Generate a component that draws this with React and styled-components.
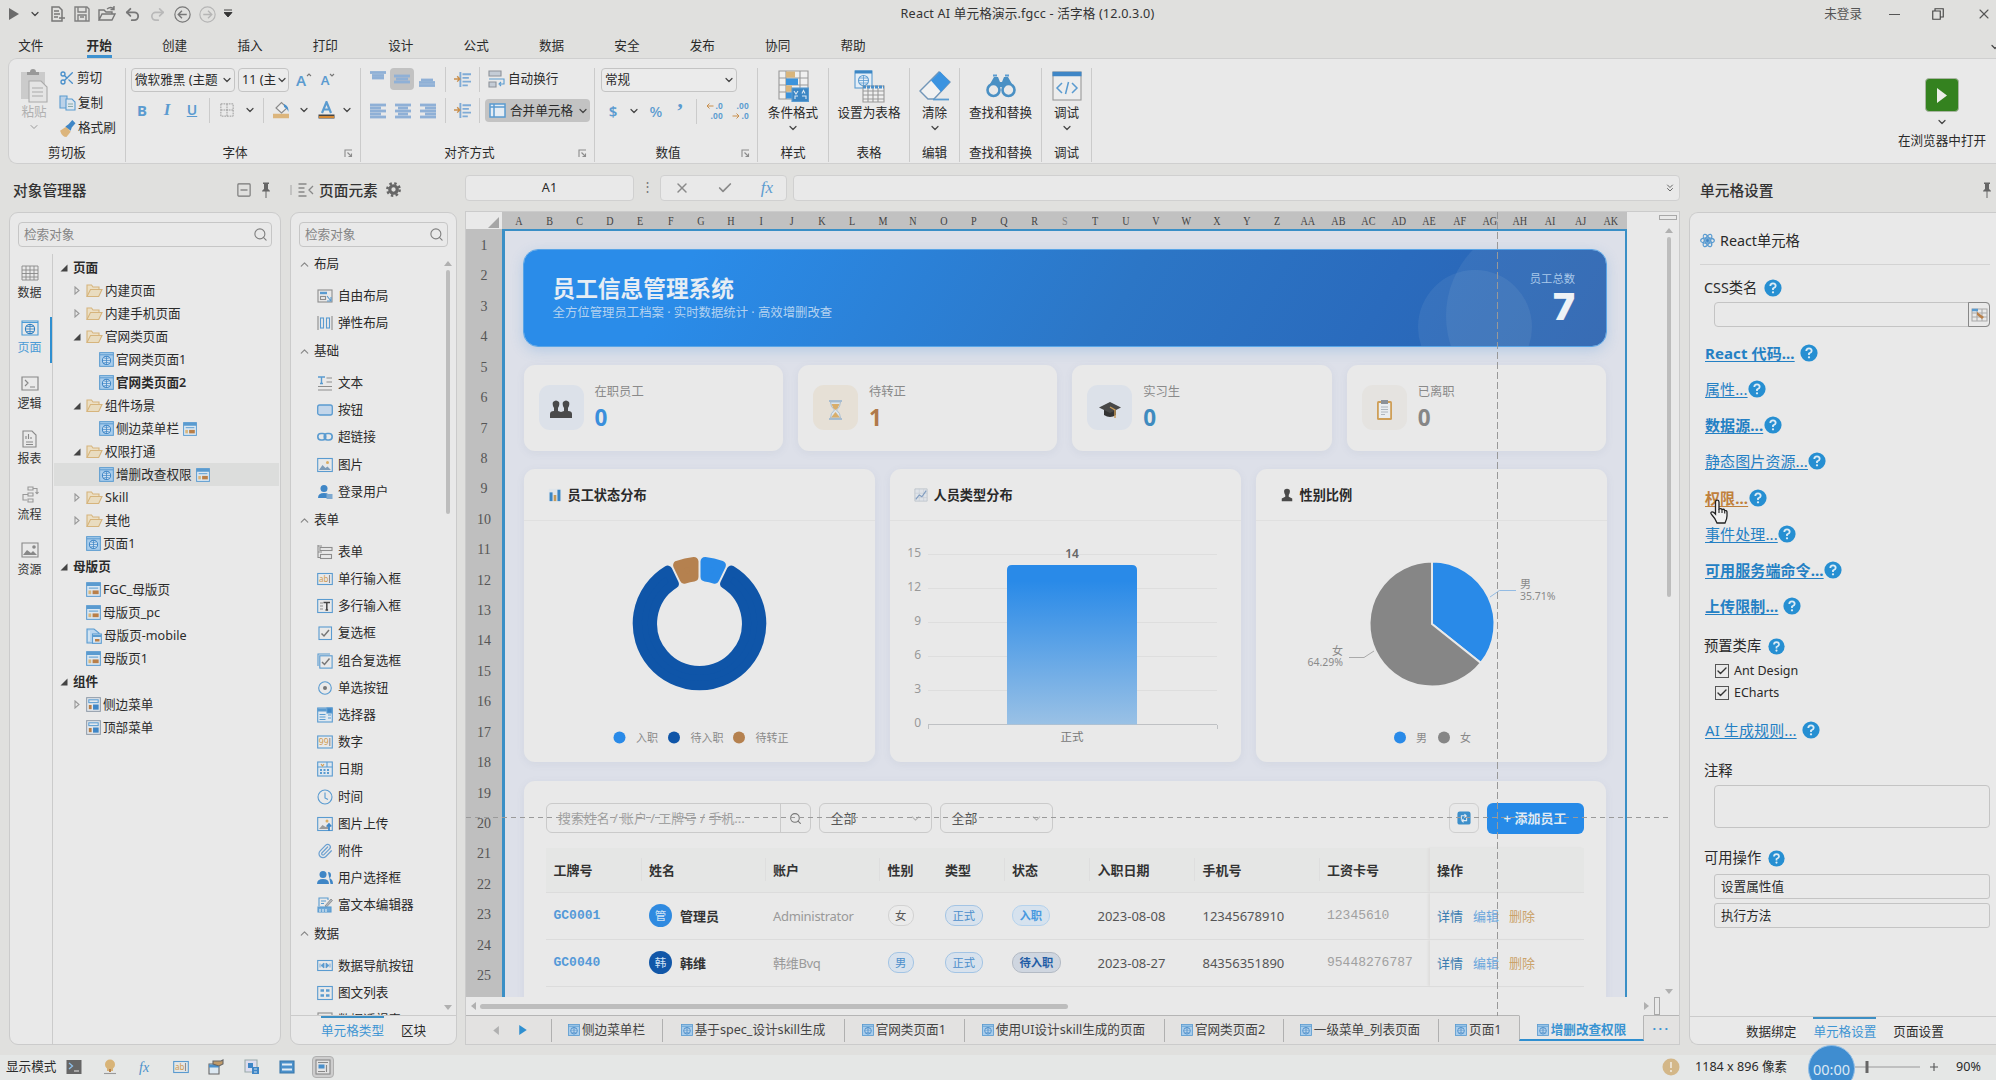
import React from 'react';
import styled, { createGlobalStyle } from 'styled-components';
import { ChevronDown, ChevronUp, ChevronsDown, Search, Undo2, Redo2, X, Check, Paperclip, Scissors } from 'lucide-react';

const BLUE = '#2f8fd0';
const LINE = '#cbcbcb';

const GlobalStyle = createGlobalStyle`
  * { box-sizing: border-box; }
  body {
    margin: 0;
    background: #e0e0de;
    color: #2a2a2a;
    font-family: 'Noto Sans', 'Noto Sans CJK SC', sans-serif;
    font-size: 12.6px;
    line-height: 18px;
    overflow: hidden;
  }
  svg { display: block; flex: none; }
`;

const Page = styled.div`
  width: 1996px;
  height: 1080px;
  display: flex;
  flex-direction: column;
  overflow: hidden;
  white-space: nowrap;
`;

/* ---------- icons ---------- */

const Svg = ({ w = 16, h, box, children }) => (
  <svg width={w} height={h || w} viewBox={box || '0 0 16 16'} fill="none" stroke="#5a9bd0" strokeWidth="1.1">
    {children}
  </svg>
);

const Chev = ({ size = 12, color = '#444' }) => <ChevronDown size={size} color={color} strokeWidth={2.4} />;

const Globe = ({ w = 15 }) => (
  <Svg w={w}>
    <rect x="0.7" y="0.7" width="14.6" height="14.6" fill="#a9cdec" stroke="#5a9bd0" />
    <path d="M1 3h14" />
    <circle cx="8" cy="9" r="4.4" fill="#cfe2f3" stroke="#3f86c6" />
    <path d="M8 4.6v8.8M3.6 9h8.8M5 6.2q3 1.6 6 0M5 11.8q3-1.6 6 0" stroke="#3f86c6" strokeWidth="0.8" />
  </Svg>
);

const Master = ({ w = 15 }) => (
  <Svg w={w}>
    <rect x="0.7" y="0.7" width="14.6" height="14.6" fill="#dce8f2" />
    <path d="M0.7 2.6h14.6" strokeWidth="3.4" />
    <path d="M3 6.5h10" stroke="#5a9bd0" />
    <rect x="2.6" y="9" width="3" height="4" fill="#d9b67d" stroke="none" />
    <rect x="7" y="9" width="6.5" height="4" fill="#b97f48" stroke="none" />
  </Svg>
);

const Component = () => (
  <Svg w={15}>
    <rect x="0.7" y="0.7" width="14.6" height="14.6" fill="#e4e9ee" stroke="#8f9ba8" />
    <rect x="3" y="3" width="10" height="3" stroke="#5a9bd0" />
    <rect x="3" y="8.5" width="3" height="4.5" fill="#b97f48" stroke="none" />
    <rect x="7.5" y="8" width="6" height="5.5" fill="#3f86c6" stroke="none" />
  </Svg>
);

const Mobile = () => (
  <Svg w={16}>
    <path d="M1 1h7l5 4v10H1z" fill="#b9d5ee" />
    <path d="M3 3v10" stroke="#e8f0f6" />
    <rect x="6.5" y="6" width="8.8" height="9.3" fill="#dce8f2" />
    <path d="M6.5 8h8.8" strokeWidth="2" />
    <rect x="9" y="11" width="4.5" height="2.5" fill="#b97f48" stroke="none" />
  </Svg>
);

const Folder = () => (
  <Svg w={17} h={15} box="0 0 17 15">
    <path d="M1 13.5V2h4.5l1.5 2h6v2.5" stroke="#d6b47c" fill="#ecdfc4" />
    <path d="M1 13.5 4.5 6.5H16l-3.3 7z" stroke="#d6b47c" fill="#e9dcc0" />
  </Svg>
);

const Help = ({ w = 18 }) => (
  <Svg w={w} box="0 0 18 18">
    <circle cx="9" cy="9" r="8.6" fill="#268fd2" stroke="none" />
    <path d="M6.3 7q0-2.7 2.7-2.7T11.7 7Q11.7 8.3 9 9.5V11" stroke="#dcecf6" strokeWidth="1.8" />
    <circle cx="9" cy="13.3" r="1.15" fill="#dcecf6" stroke="none" />
  </Svg>
);

const Pin = () => (
  <Svg w={10} h={16} box="0 0 10 16">
    <path d="M2 0.5h6v1.5H7v5q2 1 2 2.5H1Q1 8 3 7V2H2zM4.5 9.5h1V16h-1z" fill="#666" stroke="none" />
  </Svg>
);

const Launcher = () => (
  <Svg w={9} box="0 0 9 9">
    <path d="M1 8V1h7M3.5 3.5 7.5 7.5M7.5 4.5v3h-3" stroke="#8c8c8c" />
  </Svg>
);

const G = '#8d8d8d';
const elementIcons = {
  free: <><rect x="1" y="2" width="14" height="12" stroke={G} /><path d="M3 5h7" strokeWidth="2.4" /><rect x="3.5" y="8.5" width="5" height="3" stroke={G} /><path d="m10 8 4 5M14 9v4h-4" /></>,
  flex: <><path d="M1 1v14M15 1v14" stroke={G} /><rect x="3.5" y="3" width="3" height="10" /><rect x="9.5" y="3" width="3" height="10" /></>,
  text: <><path d="M1 2h7M4.5 2v6.5M3 8.5h3" strokeWidth="1.4" /><path d="M9.5 3H15M9.5 7H15M1 11.5h14M1 15h14" stroke={G} /></>,
  button: <rect x="0.7" y="3" width="14.6" height="10" rx="2" fill="#c3d6ea" strokeWidth="1.3" />,
  link: <><rect x="0.8" y="4.5" width="8" height="6.5" rx="3.2" strokeWidth="1.6" /><rect x="7.2" y="4.5" width="8" height="6.5" rx="3.2" strokeWidth="1.6" /></>,
  image: <><rect x="0.7" y="1.5" width="14.6" height="13" /><path d="m2 13 3.5-5 3 3 2-1.5L14 13z" fill="#7f9cb8" stroke="none" /><circle cx="10.5" cy="5.5" r="1.5" fill="#dcae64" stroke="none" /></>,
  user: <><circle cx="7" cy="4.5" r="3.5" fill="#3f86c6" stroke="none" /><path d="M1 14q0-5 6-5t6 5z" fill="#3f86c6" stroke="none" /><rect x="9.5" y="10" width="6" height="5" fill="#7fa9d0" stroke="none" /></>,
  form: <><path d="M1 2h4M1 8h4" stroke={G} /><rect x="3" y="3.5" width="12" height="3" stroke={G} /><path d="M1 1v13M1 13.5h3" stroke={G} /><rect x="3.5" y="10.5" width="11" height="4" stroke={G} /></>,
  single: <><rect x="0.7" y="2.5" width="14.6" height="11" /><text x="2" y="11" fontSize="8" fill="#cf9a50" stroke="none">ab</text><path d="M12.5 4v8" stroke={G} /></>,
  multi: <><rect x="0.7" y="1.5" width="14.6" height="13" /><path d="M3 5h3M3 8h3M3 11h3" stroke={G} /><path d="M6.5 4.5H13M9.8 4.5V12M8.5 12h2.6" stroke="#444" strokeWidth="1.5" /></>,
  check: <><rect x="2" y="2" width="12.5" height="12.5" /><path d="m4.5 8.5 2.5 2.5 5-6" stroke="#777" strokeWidth="1.5" /></>,
  checks: <><path d="M1 13V1h12" /><rect x="2.8" y="2.8" width="12.3" height="12.3" /><path d="m5 9 2.5 2.5 5-6" stroke="#777" strokeWidth="1.5" /></>,
  radio: <><circle cx="8" cy="8" r="6.3" /><circle cx="8" cy="8" r="2" fill="#777" stroke="none" /></>,
  select: <><rect x="0.7" y="1" width="14.6" height="14" fill="#dfe8f0" /><path d="M0.7 3h9" strokeWidth="3" /><rect x="10" y="1" width="5" height="5" fill="#3f86c6" /><path d="M2.5 7.5h6M2.5 10h6M2.5 12.5h6M11 8h3M11 11h3" /></>,
  number: <><rect x="0.7" y="2" width="14.6" height="12" /><text x="1.8" y="11" fontSize="8.5" fill="#cf9a50" stroke="none">99</text><path d="M12.8 4v8" stroke={G} /></>,
  date: <><rect x="0.7" y="1" width="14.6" height="14" fill="#dfe8f0" /><path d="M0.7 6h14.6M10 1v5" /><path d="M4 3l1.5 2L7 3" stroke="#cf9a50" /><path d="M3 9h10M3 12h10" strokeDasharray="2 1.5" strokeWidth="1.8" /></>,
  time: <><circle cx="8" cy="8" r="7" /><path d="M8 3.5V9l3 1.5" /></>,
  upload: <><rect x="0.7" y="1.5" width="14.6" height="13" /><path d="m2 13 3.5-4 3 2 2-1 2 3z" fill="#9a9a9a" stroke="none" /><circle cx="10" cy="5" r="1.5" fill="#dcae64" stroke="none" /><path d="M12 15V8M9.8 10.5 12 8l2.2 2.5" strokeWidth="1.8" stroke="#3f86c6" /></>,
  users: <><circle cx="6" cy="4.5" r="3.5" fill="#3f86c6" stroke="none" /><path d="M0 14q0-5 6-5t6 5z" fill="#3f86c6" stroke="none" /><path d="M11 2q3 0 3 3t-2 3q4 1 4 6h-2.5" fill="#3f86c6" stroke="none" /></>,
  rich: <><path d="M2 9V1h9v2M4 4h5M4 6.5h3" /><path d="m8 9 6-7 1.5 1.5L9.5 10z" fill="#b0b6bd" stroke="#888" strokeWidth="0.8" /><rect x="1" y="10" width="13" height="5" fill="#6ea8d8" /><path d="M3 12v3M6 12v3M9 12v3" stroke="#e6eef5" /></>,
  nav: <><rect x="0.7" y="2.5" width="14.6" height="10" /><path d="M3 5.5v4M7 5l-3 2.5L7 10zM13 5.5v4M9 5l3 2.5L9 10z" fill="#5a9bd0" strokeWidth="0.8" /></>,
  list: <><rect x="0.7" y="1.5" width="14.6" height="13" /><path d="M3.5 5.5h3.5M9 5.5h3.5M3.5 10.5h3.5M9 10.5h3.5" strokeWidth="2.6" /></>,
  table: <><rect x="1" y="1" width="14" height="14" stroke={G} /><path d="M1 5h14M6 5v10M1 10h14" stroke={G} /></>
};

/* ---------- title bar and menu ---------- */

const TitleBar = styled.div`
  height: 30px;
  display: grid;
  grid-template-columns: 1fr auto 1fr;
  align-items: center;
  padding: 0 4px 2px 8px;
`;

const QuickTools = styled.div`
  display: flex;
  align-items: center;
  gap: 8px;
`;

const WindowTools = styled.div`
  display: flex;
  align-items: center;
  justify-content: flex-end;
  color: #555;
  gap: 32px;
`;

const AppTitle = styled.div`
  color: #333;
  letter-spacing: 0.18px;
  padding-left: 55px;
`;

const Menu = styled.div`
  height: 28px;
  display: flex;
  align-items: center;
  padding: 5px 0 0 0;
`;

const MenuItem = styled.div`
  width: ${p => p.$w || 75.4}px;
  display: flex;
  justify-content: center;

  span {
    height: 22px;
    line-height: 20px;
    border-bottom: 3px solid ${p => (p.$active ? '#3d92d0' : 'transparent')};
    font-weight: ${p => (p.$active ? 600 : 400)};
  }
`;

const MenuMore = styled.div`
  margin-left: auto;
  margin-right: -5px;
`;

const menus = ['开始', '创建', '插入', '打印', '设计', '公式', '数据', '安全', '发布', '协同', '帮助'];

const Header = () => (
  <>
    <TitleBar>
      <QuickTools>
        <Svg w={12} h={14} box="0 0 12 14"><path d="M1 1v12l10-6z" fill="#6b6b6b" stroke="none" /></Svg>
        <div style={{ width: 14, paddingLeft: 1 }}><Chev size={12} /></div>
        <Svg w={16}><path d="M2 1h7l3 3v11H2zM4 5h5M4 8h6M4 11h4M12 9v6M9 12h6" stroke="#777" strokeWidth="1.5" /></Svg>
        <Svg w={16}><path d="M1 1h12l2 2v12H1zM4 1v5h8V1M4 15V9h8v6M6 11h4" stroke="#808080" strokeWidth="1.4" /></Svg>
        <Svg w={18} h={16} box="0 0 18 16"><path d="M1 14V4h5l2 2h6v2M1 14l3-6h13l-3 6zM9 3q4-3 7 0M16 0v3.5h-3.5" stroke="#777" strokeWidth="1.4" /></Svg>
        <Undo2 size={17} color="#777" strokeWidth={2.6} />
        <Redo2 size={17} color="#b9b9b9" strokeWidth={2.4} />
        <Svg w={17}><circle cx="8" cy="8" r="7.2" stroke="#777" /><path d="M12 8H4.5M7.5 4.5 4 8l3.5 3.5" stroke="#777" strokeWidth="1.3" /></Svg>
        <Svg w={17}><circle cx="8" cy="8" r="7.2" stroke="#b5b5b5" /><path d="M4 8h7.5M8.5 4.5 12 8l-3.5 3.5" stroke="#b5b5b5" strokeWidth="1.3" /></Svg>
        <Svg w={14} h={10} box="6 0 14 10"><path d="M6 1h8M6 3.5h8L10 8z" fill="#333" stroke="#333" strokeWidth="0.9" /></Svg>
      </QuickTools>
      <AppTitle>React AI 单元格演示.fgcc - 活字格 (12.0.3.0)</AppTitle>
      <WindowTools>
        <span style={{ marginRight: -5 }}>未登录</span>
        <Svg w={11}><path d="M0 8h16" stroke="#555" strokeWidth="1.5" /></Svg>
        <Svg w={12}><path d="M1 4h10v11H1zM4 4V1h11v11h-4" stroke="#444" strokeWidth="1.5" /></Svg>
        <X size={16} color="#555" strokeWidth={1.6} />
      </WindowTools>
    </TitleBar>
    <Menu>
      <MenuItem $w={61.5}><span>文件</span></MenuItem>
      {menus.map((m, i) => <MenuItem key={m} $active={i === 0}><span>{m}</span></MenuItem>)}
      <MenuMore><Chev size={12} /></MenuMore>
    </Menu>
  </>
);

/* ---------- ribbon ---------- */

const RibbonBox = styled.div`
  height: 106px;
  margin-left: 8px;
  display: flex;
  background: #e9e9e9;
  border: 1px solid #cfcfcf;
  border-right: 0;
  border-radius: 9px 0 0 9px;
  padding: 9px 0 0;
`;

const Group = styled.div`
  width: ${p => p.$w}px;
  height: 94px;
  display: flex;
  flex-direction: column;
  border-right: 1px solid ${LINE};
`;

const GroupBody = styled.div`
  height: 77px;
  display: flex;
  padding-left: ${p => p.$left || 0}px;
  flex-direction: ${p => (p.$row ? 'row' : 'column')};
`;

const GroupLabel = styled.div`
  display: grid;
  grid-template-columns: ${p => (p.$wide ? '1fr' : '1fr 16px')};
  align-items: center;
  text-align: center;
  line-height: 18px;
`;

const Tools = styled.div`
  height: ${p => p.$h || 24}px;
  margin-bottom: ${p => p.$mb || 0}px;
  display: flex;
  align-items: center;
`;

const Slot = styled.div`
  width: ${p => p.$w}px;
  height: 22px;
  display: flex;
  align-items: center;
  justify-content: center;
  border-radius: 4px;
  background: ${p => (p.$on ? '#c2c2c2' : 'none')};
`;

const Sep = styled.div`
  width: 1px;
  height: 25px;
  margin: 0 ${p => p.$m || 8}px;
  background: ${LINE};
`;

const Combo = styled.div`
  width: ${p => p.$w}px;
  height: 24px;
  margin-right: 3px;
  padding: 0 1px 0 3px;
  display: flex;
  align-items: center;
  justify-content: space-between;
  border: 1px solid #c4c4c4;
  border-radius: 4px;
  background: #ebebeb;
`;

const PasteButton = styled.div`
  width: 50px;
  display: flex;
  flex-direction: column;
  align-items: center;
  color: #b0b0b0;
`;

const ClipTools = styled.div`
  margin-top: -3px;
`;

const ClipTool = styled.div`
  height: 25.3px;
  display: flex;
  align-items: center;
  gap: 2px;
`;

const BigTool = styled.div`
  display: flex;
  flex-direction: column;
  align-items: center;
`;

const BigIcon = styled.div`
  height: 36px;
  display: flex;
  align-items: center;
`;

const Letter = styled.span`
  color: #5b9bd0;
  font-size: ${p => p.$size || 15}px;
  font-weight: ${p => p.$weight || 600};
  font-style: ${p => (p.$italic ? 'italic' : 'normal')};
  text-decoration: ${p => (p.$under ? 'underline' : 'none')};
  font-family: ${p => (p.$serif ? "'Liberation Serif', serif" : 'inherit')};
`;

const MergeButton = styled.div`
  width: 105px;
  height: 23px;
  display: flex;
  align-items: center;
  gap: 4px;
  padding-left: 4px;
  border-radius: 4px;
  background: #c3c3c3;
`;

const RunBox = styled.div`
  margin-left: auto;
  width: 108px;
  display: flex;
  flex-direction: column;
  align-items: center;
  padding: 10px 0 0;
  gap: 4px;
`;

const RunIcon = styled.div`
  width: 34px;
  height: 34px;
  display: flex;
  align-items: center;
  justify-content: center;
  background: #34821f;
  border: 1px solid #a9b5a2;
  border-radius: 4px;
`;

const Lines = ({ rows }) => (
  <Svg w={16}>
    {rows.map(([x1, x2, y]) => <path key={y} d={`M${x1} ${y}H${x2}`} stroke="#8fb0d6" strokeWidth="2.8" />)}
  </Svg>
);

const Indent = () => (
  <Svg w={17}>
    <path d="M6 1v14M8 3h8M8 6.5h6M8 10h8M8 13.5h5" stroke="#7fabd6" strokeWidth="1.8" />
    <path d="M0 7.5h5M3 5l2.5 2.5L3 10" stroke="#c98f4c" strokeWidth="1.3" />
  </Svg>
);

const DecimalBox = styled.div`
  width: 18px;
  height: 20px;
  display: flex;
  flex-direction: column;
  font-family: 'Liberation Sans', sans-serif;
  font-size: 8.6px;
  font-weight: 700;
  line-height: 10px;
  letter-spacing: 0.2px;
  color: #5b9bd0;

  div { display: flex; justify-content: flex-end; align-items: center; gap: 1px; }
`;

const Decimal = ({ a, b, flip }) => (
  <DecimalBox>
    <div>{!flip && <Svg w={8}><path d="M15 8H2M7 3 2 8l5 5" stroke="#c98f4c" strokeWidth="2" /></Svg>}{a}</div>
    <div>{flip && <Svg w={8}><path d="M1 8h13M9 3l5 5-5 5" stroke="#c98f4c" strokeWidth="2" /></Svg>}{b}</div>
  </DecimalBox>
);

const Ribbon = () => (
  <RibbonBox>
    <Group $w={117}>
      <GroupBody $row>
        <PasteButton>
          <Svg w={28} h={35} box="0 0 28 35">
            <path d="M1 4h24v27H1z" fill="#cbcbcb" stroke="none" />
            <path d="M7 7V4h3q0-3 3-3t3 3h3v3z" fill="#999" stroke="none" />
            <path d="M9 13h12l6 6v15H9z" fill="#e4e4e4" stroke="#aaa" />
            <path d="M12 20h11M12 24h11M12 28h11" stroke="#aaa" />
          </Svg>
          <span>粘贴</span>
          <ChevronDown size={12} color="#999" />
        </PasteButton>
        <ClipTools>
          <ClipTool>
            <Scissors size={16} color="#4a90cb" /><span>剪切</span>
          </ClipTool>
          <ClipTool>
            <Svg w={17} h={16} box="0 0 17 16">
              <path d="M1 1h7v12H1z" fill="#bcd2e8" /><path d="M7 4h6l3 3v8H7z" fill="#dde6ee" /><path d="M9 9h5M9 11.5h5" stroke="#8aa" />
            </Svg>
            <span>复制</span>
          </ClipTool>
          <ClipTool>
            <Svg w={17} h={17}>
              <path d="m1 10 6-4 4 5-4 5q-4 0-6-6z" fill="#dcb57c" stroke="none" />
              <path d="m6 6 3-2 3.5-4L15.5 3 12 7l-1 3z" fill="#3f86c6" stroke="none" />
            </Svg>
            <span>格式刷</span>
          </ClipTool>
        </ClipTools>
      </GroupBody>
      <GroupLabel $wide><span>剪切板</span></GroupLabel>
    </Group>

    <Group $w={235}>
      <GroupBody $left={5}>
        <Tools $mb={6}>
          <Combo $w={104}><span>微软雅黑 (主题</span><Chev /></Combo>
          <Combo $w={51}><span>11 (主</span><Chev /></Combo>
          <Slot $w={24}><Letter>A</Letter><Svg w={6} h={14} box="0 0 6 14"><path d="M1 3 3 1l2 2" stroke="#777" /></Svg></Slot>
          <Slot $w={24}><Letter $size={13}>A</Letter><Svg w={6} h={14} box="0 0 6 14"><path d="M1 1l2 2 2-2" stroke="#777" /></Svg></Slot>
        </Tools>
        <Tools>
          <Slot $w={22}><Letter $weight={700}>B</Letter></Slot>
          <Slot $w={28}><Letter $italic $serif $size={17} $weight={700}>I</Letter></Slot>
          <Slot $w={22}><Letter $under $size={14}>U</Letter></Slot>
          <Sep $m={6} />
          <Slot $w={22}><Svg w={14}><path d="M1 1h14v14H1zM8 1v14M1 8h14" stroke="#999" strokeDasharray="2 1" /></Svg></Slot>
          <Slot $w={24}><Chev /></Slot>
          <Sep $m={1} />
          <Slot $w={32}>
            <Svg w={18} h={18} box="0 0 18 18">
              <path d="M1 15h16" stroke="#dcb57c" strokeWidth="4.500" />
              <path d="m4 7 5.500-5.500L15 7l-5.500 5z" stroke="#8a8a8a" fill="#eee" /><path d="M12 3q5 2 4.500 8-1.500-4-4.500-5z" fill="#4a90cb" stroke="none" />
            </Svg>
          </Slot>
          <Slot $w={14}><Chev /></Slot>
          <Slot $w={30}>
            <Svg w={17} h={18} box="0 0 17 18">
              <path d="m4 12 4.500-11L13 12M5.500 8.500h6" strokeWidth="2.200" />
              <path d="M0.500 15.500h16" stroke="#444" strokeWidth="4" /><path d="M1 16h15" stroke="#d68a35" strokeWidth="2" />
            </Svg>
          </Slot>
          <Slot $w={12}><Chev /></Slot>
        </Tools>
      </GroupBody>
      <GroupLabel><span>字体</span><Launcher /></GroupLabel>
    </Group>

    <Group $w={234}>
      <GroupBody $left={5}>
        <Tools $h={22} $mb={9}>
          <Slot $w={24}><Lines rows={[[0, 16, 1.5], [2, 14, 4.5], [2, 14, 7]]} /></Slot>
          <Slot $w={24} $on><Lines rows={[[0, 16, 5], [2, 14, 8], [0, 16, 11]]} /></Slot>
          <Slot $w={26}><Lines rows={[[2, 14, 9], [0, 16, 11.5], [0, 16, 14.5]]} /></Slot>
          <Sep $m={5} />
          <Slot $w={22}><Indent /></Slot>
          <Sep $m={6} />
          <Slot $w={22}>
            <Svg w={18} h={18} box="0 0 18 18">
              <path d="M1 1h12v5H1zM1 12h7v5H1z" stroke="#8d9299" fill="#c4ccd6" /><path d="M1 9h15v5h-4M13 12l-2 2 2 2" />
            </Svg>
          </Slot>
          <span>自动换行</span>
        </Tools>
        <Tools $h={23}>
          <Slot $w={24}><Lines rows={[[0, 16, 2], [0, 11, 5], [0, 16, 8], [0, 11, 11], [0, 16, 14]]} /></Slot>
          <Slot $w={26}><Lines rows={[[0, 16, 2], [3, 13, 5], [0, 16, 8], [3, 13, 11], [0, 16, 14]]} /></Slot>
          <Slot $w={24}><Lines rows={[[0, 16, 2], [5, 16, 5], [0, 16, 8], [5, 16, 11], [0, 16, 14]]} /></Slot>
          <Sep $m={5} />
          <Slot $w={22}><Indent /></Slot>
          <Sep $m={5.5} />
          <MergeButton>
            <Svg w={17} h={15} box="0 0 17 15"><path d="M1 1h15v13H1zM1 4h15M5 1v13" strokeWidth="1.5" fill="#e5edf4" /></Svg>
            <span>合并单元格</span>
            <Chev />
          </MergeButton>
        </Tools>
      </GroupBody>
      <GroupLabel><span>对齐方式</span><Launcher /></GroupLabel>
    </Group>

    <Group $w={163}>
      <GroupBody $left={6}>
        <Tools $mb={7}><Combo $w={136}><span>常规</span><Chev /></Combo></Tools>
        <Tools>
          <Slot $w={24}><Letter>$</Letter></Slot>
          <Slot $w={18}><Chev /></Slot>
          <Slot $w={26}><Letter $weight={500}>%</Letter></Slot>
          <Slot $w={22}><Letter $size={22} $serif $weight={700}>’</Letter></Slot>
          <Sep $m={5} />
          <Slot $w={24}><Decimal a=".0" b=".00" /></Slot>
          <Slot $w={28}><Decimal a=".00" b=".0" flip /></Slot>
        </Tools>
      </GroupBody>
      <GroupLabel><span>数值</span><Launcher /></GroupLabel>
    </Group>

    <Group $w={71}>
      <GroupBody>
        <BigTool>
          <BigIcon>
            <Svg w={31} h={32} box="0 0 31 32">
              <path d="M1 1h29v28H1zM1 8h29M1 15h29M1 22h29M8 1v28M22 1v28" stroke="#999" fill="#f0f0f0" />
              <path d="M8 1.5h9v6H8zM8 15.5h6v6H8z" fill="#d9b57c" stroke="none" /><path d="M8 8.5h12v6.5H8zM8 22.5h6v6H8z" fill="#3b93dc" stroke="none" />
              <rect x="14" y="18" width="16.5" height="13.5" fill="#3b86c4" />
              <path d="m16 21 2 3 2-3M24 23.500l1.500-3 1.500 3M17 29v-3h3M24 26h4v3" stroke="#dbe8f3" />
            </Svg>
          </BigIcon>
          <span>条件格式</span><Chev />
        </BigTool>
      </GroupBody>
      <GroupLabel $wide><span>样式</span></GroupLabel>
    </Group>

    <Group $w={81}>
      <GroupBody>
        <BigTool>
          <BigIcon>
            <Svg w={31} h={33} box="0 0 31 33">
              <rect x="1" y="1" width="17" height="17" fill="#e4eef7" /><path d="M1 2h17" strokeWidth="3" stroke="#3b86c4" />
              <circle cx="9.5" cy="10.5" r="5" /><path d="M9.5 5.5v10M4.5 10.5h10M5.500 8h8M5.5 13h8" strokeWidth="0.8" />
              <path d="M9 16h21v16H9zM9 21h21M9 25h21M9 29h21M14 18v14M19 18v14M24 18v14" stroke="#999" fill="#efefef" /><path d="M9 17h21" stroke="#4a90cb" strokeWidth="3" strokeDasharray="3 1" />
            </Svg>
          </BigIcon>
          <span>设置为表格</span>
        </BigTool>
      </GroupBody>
      <GroupLabel $wide><span>表格</span></GroupLabel>
    </Group>

    <Group $w={50}>
      <GroupBody>
        <BigTool>
          <BigIcon>
            <Svg w={32} h={30} box="0 0 32 30">
              <path d="M1 20 20 1l11 10-16 17H9z" fill="#f1f1f1" stroke="#7296b8" strokeWidth="1.4" /><path d="m12 9.5 9-9L31 11l-9 10z" fill="#3b93e0" stroke="none" /><path d="M14 28.5h16" strokeWidth="1.8" />
            </Svg>
          </BigIcon>
          <span>清除</span><Chev />
        </BigTool>
      </GroupBody>
      <GroupLabel $wide><span>编辑</span></GroupLabel>
    </Group>

    <Group $w={82}>
      <GroupBody>
        <BigTool>
          <BigIcon>
            <Svg w={30} h={24} box="0 0 30 24">
              <circle cx="7.5" cy="16" r="6" strokeWidth="2.6" stroke="#4a90c4" /><circle cx="22.5" cy="16" r="6" strokeWidth="2.6" stroke="#4a90c4" />
              <path d="M4 10 8 3h4l2 5h2l2-5h4l4 7q-6-2-8 3h-6q-2-5-8-3z" fill="#4a90c4" stroke="none" /><path d="M7 1.5h4M19 1.5h4" strokeWidth="1.8" />
            </Svg>
          </BigIcon>
          <span>查找和替换</span>
        </BigTool>
      </GroupBody>
      <GroupLabel $wide><span>查找和替换</span></GroupLabel>
    </Group>

    <Group $w={50}>
      <GroupBody>
        <BigTool>
          <BigIcon>
            <Svg w={30} h={30} box="0 0 30 30">
              <rect x="1" y="1" width="28" height="28" stroke="#999" fill="#ededed" /><path d="M0.5 3h29" stroke="#3f86c6" strokeWidth="4.5" />
              <path d="m10 12-5 5 5 5M20 12l5 5-5 5M16.5 11l-3 12" strokeWidth="1.5" />
            </Svg>
          </BigIcon>
          <span>调试</span><Chev />
        </BigTool>
      </GroupBody>
      <GroupLabel $wide><span>调试</span></GroupLabel>
    </Group>

    <RunBox>
      <RunIcon><Svg w={12} h={17} box="0 0 12 17"><path d="M1 1v15l10-7.5z" fill="#eceee9" stroke="none" /></Svg></RunIcon>
      <Chev />
      <span>在浏览器中打开</span>
    </RunBox>
  </RibbonBox>
);

/* ---------- side panels ---------- */

const Main = styled.div`
  height: 891px;
  display: flex;
`;

const Column = styled.div`
  width: ${p => p.$w}px;
  margin-left: ${p => p.$ml || 9}px;
  display: flex;
  flex-direction: column;
  flex: none;
`;

const PanelHead = styled.div`
  height: 48px;
  padding-top: 3px;
  display: flex;
  align-items: center;
  font-size: 14.7px;
  font-weight: 500;
  color: #333;
`;

const Spacer = styled.div`
  flex: 1;
`;

const Panel = styled.div`
  height: 833px;
  border: 1px solid ${LINE};
  border-radius: 9px;
  background: #e9e9e9;
  display: flex;
  flex-direction: column;
  overflow: hidden;
`;

const SearchBox = styled.div`
  height: 25px;
  margin: 9px 8px 0;
  padding: 0 3px 0 5px;
  display: flex;
  align-items: center;
  justify-content: space-between;
  border: 1px solid #c6c6c6;
  border-radius: 4px;
  color: #858585;
`;

const TreeArea = styled.div`
  flex: 1;
  margin-top: 7px;
  display: flex;
`;

const Rail = styled.div`
  width: 43px;
  padding-top: 8px;
  border-right: 1px solid ${LINE};
`;

const RailItem = styled.div`
  height: 46px;
  margin-bottom: 9.4px;
  padding: 1px 1px 0 0;
  display: flex;
  flex-direction: column;
  align-items: center;
  font-size: 12px;
  color: ${p => (p.$active ? '#4b9bd6' : '#333')};
  border-right: 2px solid ${p => (p.$active ? BLUE : 'transparent')};

  span { line-height: 19px; }
`;

const RailIcon = styled.div`
  height: 20px;
  display: flex;
  align-items: center;
`;

const rail = [
  ['数据', <Svg w={18} h={16} box="0 0 18 16"><path d="M1 1h16v14H1zM1 5h16M1 8.5h16M1 12h16M5 1v14M9 1v14M13 1v14" stroke="#888" strokeWidth="0.9" /></Svg>],
  ['页面', <Svg w={18} h={16} box="0 0 18 16"><path d="M1 1h16v14H1zM1 2.5h16" stroke="#4b9bd6" /><circle cx="9" cy="9" r="4.6" stroke="#2f7fc0" /><path d="M9 4v10M4.5 9h9M5.5 6.5h7M5.5 11.5h7" stroke="#2f7fc0" strokeWidth="0.8" /></Svg>],
  ['逻辑', <Svg w={18} h={15} box="0 0 18 15"><path d="M1 1h16v13H1zM4 4l3 3-3 3M9 11h5" stroke="#888" strokeWidth="1.2" /></Svg>],
  ['报表', <Svg w={15} h={18} box="0 0 15 18"><path d="M1 1h9l4 4v12H1zM4 9V6M6.5 9V4M9 9V7M4 12h7M4 14.5h7" stroke="#888" /></Svg>],
  ['流程', <Svg w={18} h={17} box="0 0 18 17"><path d="M7 1h5v3H7zM7 7h5v3H7zM7 13h5v3H7zM12 2.5h4v5M16 8l-1.5-2M16 8l1.5-2M7 8.500H2V14h4" stroke="#999" /></Svg>],
  ['资源', <Svg w={18} h={16} box="0 0 18 16"><path d="M1 1h16v14H1z" stroke="#888" /><path d="m2 13 4-5 4 3 2-2 4 4z" fill="#888" stroke="none" /><circle cx="13" cy="5" r="1.8" fill="#888" stroke="none" /></Svg>]
];

const Tree = styled.div`
  flex: 1;
  padding: 2px 1px 0;
`;

const TreeRow = styled.div`
  height: 23px;
  padding-left: ${p => 6 + p.$level * 13}px;
  display: flex;
  align-items: center;
  background: ${p => (p.$selected ? '#dcdddc' : 'none')};
  font-weight: ${p => (p.$bold ? 600 : 400)};
  color: #2b2b2b;

  span { margin: 0 4px 0 ${p => (p.$level ? 2 : 0)}px; }
`;

const Toggle = styled.div`
  width: 13px;
`;

const Arrow = ({ open }) => (
  <Toggle>
    {open === true && <Svg w={8} box="0 0 8 8"><path d="M7.5 0.5v7h-7z" fill="#444" stroke="none" /></Svg>}
    {open === false && <Svg w={8} h={9} box="0 0 8 9"><path d="m2 1 4 3.5L2 8z" stroke="#999" /></Svg>}
  </Toggle>
);

const tree = [
  [0, '页面', true],
  [1, '内建页面', false, <Folder />],
  [1, '内建手机页面', false, <Folder />],
  [1, '官网类页面', true, <Folder />],
  [2, '官网类页面1', null, <Globe />],
  [2, '官网类页面2', null, <Globe />, 'bold'],
  [1, '组件场景', true, <Folder />],
  [2, '侧边菜单栏', null, <Globe />, 'master'],
  [1, '权限打通', true, <Folder />],
  [2, '增删改查权限', null, <Globe />, 'selected'],
  [1, 'Skill', false, <Folder />],
  [1, '其他', false, <Folder />],
  [1, '页面1', null, <Globe />],
  [0, '母版页', true],
  [1, 'FGC_母版页', null, <Master />],
  [1, '母版页_pc', null, <Master />],
  [1, '母版页-mobile', null, <Mobile />],
  [1, '母版页1', null, <Master />],
  [0, '组件', true],
  [1, '侧边菜单', false, <Component />],
  [1, '顶部菜单', null, <Component />]
];

const ObjectManager = () => (
  <Column $w={272}>
    <PanelHead>
      <span style={{ marginLeft: 4 }}>对象管理器</span>
      <Spacer />
      <Svg w={14}><rect x="1" y="1" width="14" height="14" rx="1" stroke="#777" strokeWidth="1.3" /><path d="M4 8h8" stroke="#777" strokeWidth="1.4" /></Svg>
      <Spacer style={{ flex: '0 0 10px' }} />
      <Pin />
      <Spacer style={{ flex: '0 0 10px' }} />
    </PanelHead>
    <Panel>
      <SearchBox><span>检索对象</span><Search size={15} color="#808080" strokeWidth={1.8} /></SearchBox>
      <TreeArea>
        <Rail>
          {rail.map(([label, icon], i) => (
            <RailItem key={label} $active={i === 1}><RailIcon>{icon}</RailIcon><span>{label}</span></RailItem>
          ))}
        </Rail>
        <Tree>
          {tree.map(([level, label, open, icon, mark]) => (
            <TreeRow key={label} $level={level} $bold={level === 0 || mark === 'bold'} $selected={mark === 'selected'}>
              <Arrow open={open} />
              {icon}
              <span>{label}</span>
              {(mark === 'master' || mark === 'selected') && <Master w={14} />}
            </TreeRow>
          ))}
        </Tree>
      </TreeArea>
    </Panel>
  </Column>
);

const sections = [
  ['布局', [['自由布局', 'free'], ['弹性布局', 'flex']]],
  ['基础', [['文本', 'text'], ['按钮', 'button'], ['超链接', 'link'], ['图片', 'image'], ['登录用户', 'user']]],
  ['表单', [
    ['表单', 'form'], ['单行输入框', 'single'], ['多行输入框', 'multi'], ['复选框', 'check'], ['组合复选框', 'checks'],
    ['单选按钮', 'radio'], ['选择器', 'select'], ['数字', 'number'], ['日期', 'date'], ['时间', 'time'],
    ['图片上传', 'upload'], ['附件', 'clip'], ['用户选择框', 'users'], ['富文本编辑器', 'rich']
  ]],
  ['数据', [['数据导航按钮', 'nav'], ['图文列表', 'list'], ['数据透视表', 'table']]]
];

const Palette = styled.div`
  height: 768px;
  padding-top: 2px;
  display: flex;
  overflow: hidden;
`;

const PaletteList = styled.div`
  flex: 1;
`;

const SectionTitle = styled.div`
  height: 33px;
  padding: 0 0 3px 7px;
  display: flex;
  align-items: center;
  gap: 3px;
`;

const PaletteItem = styled.div`
  height: 27.2px;
  padding-left: 26px;
  display: flex;
  align-items: center;
  gap: 5px;
`;

const VScroll = styled.div`
  width: 8px;
  margin-right: 4px;
  display: flex;
  flex-direction: column;
  align-items: center;
  padding: ${p => p.$pad || '10px 0 4px'};
`;

const Thumb = styled.div`
  width: 4px;
  height: ${p => p.$h}px;
  margin: 3px 0 auto;
  border-radius: 2px;
  background: #bdbdbd;
`;

const PanelTabs = styled.div`
  height: 28px;
  flex: none;
  display: flex;
  gap: ${p => p.$gap}px;
  padding-left: ${p => p.$left}px;
  border-top: 1px solid ${LINE};
`;

const PanelTab = styled.div`
  border-top: 2px solid ${p => (p.$active ? '#3d8fc4' : 'transparent')};
  color: ${p => (p.$active ? '#3f95d3' : '#2b2b2b')};
  line-height: 25px;
`;

const Tri = ({ d, w = 8, color = '#b0b0b0' }) => (
  <Svg w={w} h={w} box="0 0 8 8"><path d={d} fill={color} stroke="none" /></Svg>
);

const Elements = () => (
  <Column $w={167}>
    <PanelHead>
      <Svg w={26} h={16} box="0 0 26 16"><path d="M1 3v10" stroke="#aaa" /><path d="M8.5 2h8M8.5 6h6M8.5 10h6M8.5 14h8M23 4l-4 4 4 4" stroke="#888" strokeWidth="1.3" /></Svg>
      <span style={{ margin: '0 8px 0 3px' }}>页面元素</span>
      <Svg w={15}><circle cx="8" cy="8" r="4" stroke="#666" strokeWidth="3.4" /><circle cx="8" cy="8" r="6.6" stroke="#666" strokeWidth="2.6" strokeDasharray="2.6 2.58" /></Svg>
    </PanelHead>
    <Panel>
      <SearchBox><span>检索对象</span><Search size={15} color="#808080" strokeWidth={1.8} /></SearchBox>
      <Palette>
        <PaletteList>
          {sections.map(([title, items]) => (
            <React.Fragment key={title}>
              <SectionTitle><ChevronUp size={13} color="#888" strokeWidth={2.2} /><span>{title}</span></SectionTitle>
              {items.map(([label, icon]) => (
                <PaletteItem key={label}>
                  {icon === 'clip' ? <Paperclip size={16} color="#6a9fd0" strokeWidth={1.8} /> : <Svg w={16}>{elementIcons[icon]}</Svg>}
                  <span>{label}</span>
                </PaletteItem>
              ))}
            </React.Fragment>
          ))}
        </PaletteList>
        <VScroll><Tri d="M0 7 4 2l4 5z" /><Thumb $h={244} /><Tri d="M0 2l4 5 4-5z" /></VScroll>
      </Palette>
      <PanelTabs $left={30} $gap={17}>
        <PanelTab $active>单元格类型</PanelTab>
        <PanelTab>区块</PanelTab>
      </PanelTabs>
    </Panel>
  </Column>
);

/* ---------- employee page drawn on the sheet ---------- */

const Canvas = styled.div`
  width: 1125px;
  height: 768px;
  flex: none;
  overflow: hidden;
  padding: 18.5px 19px 0 18.5px;
  background: #dde0e9;
  border: 2px solid #3a8fc6;
  border-left-width: 3px;
  border-bottom: 0;
`;

const Hero = styled.div`
  height: 96px;
  display: flex;
  justify-content: space-between;
  padding: 25px 31px 0 29px;
  border-radius: 14px;
  color: #dfeaf6;
  position: relative;
  overflow: hidden;
  background: linear-gradient(120deg, #2a8ce9 0%, #2a8ce9 15%, #2c76c6 55%, #2a6bbd 78%, #2b62b0 100%);
  outline: 1px solid #5aa5e6;
`;

const HeroShadow = styled.div`
  border-radius: 14px;
  box-shadow: 0 4px 14px rgba(70, 140, 215, 0.28);
`;

const HeroTitle = styled.div`
  font-size: 22.7px;
  font-weight: 700;
  line-height: 28px;
  color: #e6edf4;
`;

const HeroSub = styled.div`
  font-size: 12.4px;
  line-height: 20px;
  color: #b4d2f0;
`;

const HeroTotal = styled.div`
  text-align: right;
  font-size: 11.3px;
  line-height: 18px;
  margin-top: -5px;
  color: #a9c9ea;
  z-index: 1;

  b {
    display: block;
    font-family: Inter, 'Noto Sans', sans-serif;
    font-size: 37px;
    font-weight: 900;
    line-height: 37px;
    color: #eef2f6;
  }
`;

/* translucent discs behind the total */
const Disc = styled.i`
  position: absolute;
  left: ${p => p.$x}px;
  top: ${p => p.$y}px;
  width: ${p => p.$d}px;
  height: ${p => p.$d}px;
  border-radius: 50%;
  background: rgba(220, 230, 235, 0.08);
`;

const Row = styled.div`
  display: grid;
  grid-template-columns: repeat(${p => p.$n}, 1fr);
  gap: 15px;
  margin-top: ${p => p.$mt || 19}px;
`;

const Card = styled.div`
  background: #e9e9e9;
  border-radius: 11px;
  box-shadow: 0 2px 8px rgba(90, 100, 140, 0.08);
`;

const Stat = styled(Card)`
  height: 86px;
  display: flex;
  gap: 11px;
  padding: 20px 15px;
`;

const StatIcon = styled.div`
  width: 45px;
  height: 45px;
  display: flex;
  align-items: center;
  justify-content: center;
  padding-top: 5px;
  border-radius: 11px;
  background: ${p => p.$bg};
`;

const StatText = styled.div`
  font-size: 12.3px;
  line-height: 14px;
  color: #8a8a8a;

  b { display: block; margin-top: 11px; font-size: 22.5px; line-height: 16px; color: ${p => p.$color}; }
`;

const stats = [
  ['在职员工', 0, '#dce1e9', '#3a8fdc', <Svg w={22} h={20} box="0 0 22 20"><path d="M3 2q3-3 6 0 1 3-1 6v3l3 1 3-1V8q-2-3-1-6 3-3 6 0 1 3-1 6v3q4 0 4 3v4H0v-4q0-3 4-3V8Q2 5 3 2z" fill="#4a4a4a" stroke="none" /></Svg>],
  ['待转正', 1, '#e6e0d6', '#b0794a', <Svg w={15} h={22} box="0 0 15 22"><path d="M1 1h13v2H1zM1 19h13v2H1z" fill="#a8bdd0" stroke="none" /><path d="M2.5 3h10q0 5-4 8 4 3 4 8h-10q0-5 4-8-4-3-4-8z" fill="#dde4ea" stroke="#9fb6cc" strokeWidth="0.8" /><path d="M3.5 5h8q-1 4-4 6-3-2-4-6zM7.5 13l4.5 5.5H3z" fill="#d8ae6c" stroke="none" /></Svg>],
  ['实习生', 0, '#dce1e9', '#3f8bbf', <Svg w={22} h={20} box="0 0 22 20"><path d="M5 8v7q6 4 12 0V8z" fill="#333" stroke="none" /><path d="M0 7.5 11 2l11 5.5L11 13z" fill="#484848" stroke="none" /><path d="M11 7l5 3v8" stroke="#c79a58" strokeWidth="1.4" /></Svg>],
  ['已离职', 0, '#e5e3e0', '#868686', <Svg w={17} h={22} box="0 0 17 22"><rect x="1" y="2" width="15" height="19" rx="1.5" fill="#cf9f58" stroke="none" /><path d="M2.8 4h11.4v15H2.8z" fill="#e9edf0" stroke="none" /><path d="M5 1h7v4H5z" fill="#8a9199" stroke="none" /><path d="M5 8h7M5 10.5h7M5 13h7M5 15.5h4" stroke="#a7b0b8" strokeWidth="0.9" /></Svg>]
];

const ChartCard = styled(Card)`
  height: 293px;
`;

const ChartHead = styled.div`
  height: 52px;
  padding-left: 24px;
  display: flex;
  align-items: center;
  gap: 6px;
  font-size: 13.2px;
  font-weight: 700;
  border-bottom: 1px solid #e0e0e0;
`;

const polar = (cx, cy, r, deg) => {
  const a = (deg - 90) * Math.PI / 180;
  return `${(cx + r * Math.cos(a)).toFixed(2)} ${(cy + r * Math.sin(a)).toFixed(2)}`;
};

const ringPath = (cx, cy, r1, r2, from, to) => {
  const big = to - from > 180 ? 1 : 0;
  // keep the gap between slices parallel by widening the trim on the inner arc
  const trim = 5.6;
  const o = trim / r2 * 57.3;
  const n = trim / r1 * 57.3;
  return `M${polar(cx, cy, r2, from + o)}A${r2} ${r2} 0 ${big} 1 ${polar(cx, cy, r2, to - o)}L${polar(cx, cy, r1, to - n)}A${r1} ${r1} 0 ${big} 0 ${polar(cx, cy, r1, from + n)}Z`;
};

const Dot = ({ x, c }) => <circle cx={x} cy="216.5" r="6" fill={c} />;

const Chart = styled.svg`
  font-size: 11px;
  fill: #8a8a8a;
`;

const Donut = () => (
  <Chart width="351" height="240">
    {[[0, 25.7, '#298ae8'], [25.7, 334.3, '#0f55a8'], [334.3, 360, '#b5814f']].map(([a, b, c]) => (
      <path key={c} d={ringPath(175.5, 102.5, 47, 62.2, a, b)} fill={c} stroke={c} strokeWidth="9.2" strokeLinejoin="round" />
    ))}
    <Dot x={95.5} c="#298ae8" /><text x="112" y="220.5">入职</text>
    <Dot x={150} c="#0f55a8" /><text x="166.5" y="220.5">待入职</text>
    <Dot x={215} c="#b5814f" /><text x="231.5" y="220.5">待转正</text>
  </Chart>
);

const Bars = () => (
  <Chart width="351" height="240">
    <defs>
      <linearGradient id="bar" x1="0" y1="0" x2="0" y2="1">
        <stop offset="0.1" stopColor="#298ae8" /><stop offset="1" stopColor="#9ac1e5" />
      </linearGradient>
    </defs>
    {[15, 12, 9, 6, 3, 0].map((v, i) => (
      <g key={v}>
        <path d={`M38 ${33.5 + i * 34}H327`} stroke={v ? '#dedede' : '#bfc1c4'} />
        <text x="31" y={36 + i * 34} fontSize="12" textAnchor="end" fill="#999">{v}</text>
      </g>
    ))}
    <path d="M38.5 204v4M327.5 204v4" stroke="#bfc1c4" />
    <path d="M117 203.5V49q0-5 5-5h120q5 0 5 5v154.5z" fill="url(#bar)" />
    <text x="182" y="36.5" fontSize="12" fontWeight="600" textAnchor="middle" fill="#666">14</text>
    <text x="182" y="219.5" fontSize="11.5" textAnchor="middle" fill="#777">正式</text>
  </Chart>
);

const Pie = () => (
  <Chart width="351" height="240">
    <path d={`M176 103L${polar(176, 103, 62.5, 0)}A62.5 62.5 0 0 1 ${polar(176, 103, 62.5, 128.6)}Z`} fill="#298ae8" stroke="#e9e9e9" strokeWidth="2" />
    <path d={`M176 103L${polar(176, 103, 62.5, 128.6)}A62.5 62.5 0 1 1 ${polar(176, 103, 62.5, 0)}Z`} fill="#868686" stroke="#e9e9e9" strokeWidth="2" />
    <path d="M234 76l9.5-6.5H260" fill="none" stroke="#93bbe3" />
    <path d="M118 130l-10 6.5H93" fill="none" stroke="#aaa" />
    <text x="264" y="67">男</text><text x="264" y="78.5" fontSize="10.5">35.71%</text>
    <text x="87" y="134" textAnchor="end">女</text><text x="87" y="145" fontSize="10.5" textAnchor="end">64.29%</text>
    <Dot x={144} c="#298ae8" /><text x="160" y="220.5">男</text>
    <Dot x={188} c="#868686" /><text x="204" y="220.5">女</text>
  </Chart>
);

const charts = [
  ['员工状态分布', <Donut />, <Svg w={14}><path d="M1 1h14v14H1z" fill="#dfe5ea" stroke="none" /><path d="M3.5 15V5" stroke="#3b86c4" strokeWidth="3.4" /><path d="M8 15V8" stroke="#c49a5a" strokeWidth="3" /><path d="M12.5 15V2" stroke="#3b86c4" strokeWidth="3.4" /></Svg>],
  ['人员类型分布', <Bars />, <Svg w={14}><path d="M1 1h14v14H1z" fill="#dfe3e8" stroke="#b4bcc4" strokeWidth="0.8" /><path d="M1 6h14M1 11h14M6 1v14M11 1v14" stroke="#c4cbd2" strokeWidth="0.7" /><path d="m2 13 4-5 3 2 5-7" stroke="#7f9cc0" strokeWidth="1.3" /></Svg>],
  ['性别比例', <Pie />, <Svg w={14}><path d="M5 2q3-2.5 6 0 1 3-1 6v2l4 2v3H2v-3l4-2V8Q4 5 5 2z" fill="#4a4a4a" stroke="none" /></Svg>]
];

const TableCard = styled(Card)`
  height: 300px;
  margin-top: 18.5px;
  padding: 22px 22.5px 0;
`;

const TableTools = styled.div`
  height: 31px;
  display: flex;
  align-items: center;
  margin-bottom: 14.5px;
`;

const Field = styled.div`
  width: ${p => p.$w}px;
  height: 30px;
  margin-right: 7.5px;
  display: flex;
  align-items: center;
  justify-content: space-between;
  padding: 0 ${p => p.$pr || 9}px 0 11px;
  border: 1px solid #cacaca;
  border-radius: 6px;
  font-size: 12.9px;
  color: ${p => (p.$hint ? '#a2a2a2' : '#555')};
`;

const SearchButton = styled.div`
  width: 30px;
  height: 28px;
  display: flex;
  align-items: center;
  justify-content: center;
  border-left: 1px solid #cacaca;
`;

const Refresh = styled.div`
  width: 30px;
  height: 30px;
  margin: 0 8px 0 auto;
  display: flex;
  align-items: center;
  justify-content: center;
  border: 1px solid #cfcfcf;
  border-radius: 6px;
`;

const AddButton = styled.div`
  width: 97px;
  height: 31px;
  line-height: 31px;
  text-align: center;
  border-radius: 6px;
  background: #268ae8;
  color: #dfeaf6;
  font-size: 13px;
  font-weight: 600;
`;

const TableRow = styled.div`
  height: ${p => p.$h}px;
  display: grid;
  grid-template-columns: 95.5px 124px 114.5px 57.5px 67px 85.5px 105px 124.5px 110px 1fr;
  align-items: center;
  background: ${p => (p.$head ? '#e5e6e5' : 'none')};
  border-bottom: 1px solid #dcdcdc;
  font-size: 13px;
  color: #555;
`;

const Cell = styled.div`
  height: ${p => (p.$fixed ? '100%' : '23px')};
  display: flex;
  align-items: center;
  gap: ${p => p.$gap || 8}px;
  padding-left: 7.5px;
  color: ${p => p.$color || 'inherit'};
  font-weight: ${p => (p.$bold ? 600 : 400)};
  letter-spacing: ${p => p.$track || 0}px;
  border-right: ${p => (p.$rule ? '1px solid #dedede' : '0')};
  box-shadow: ${p => (p.$fixed ? '-2px 0 2px #dedddc' : 'none')};
`;

const Mono = styled.span`
  font-family: 'Liberation Mono', monospace;
  font-weight: ${p => (p.$bold ? 700 : 400)};
  color: ${p => (p.$bold ? '#5499d8' : '#a0a0a0')};
`;

const Avatar = styled.div`
  width: 23px;
  height: 23px;
  line-height: 23px;
  text-align: center;
  border-radius: 50%;
  background: ${p => p.$bg};
  color: #cfe2f5;
  font-size: 11.5px;
  font-weight: 400;
`;

const Tag = styled.div`
  height: 21px;
  line-height: 19px;
  padding: 0 6.5px;
  border: 1px solid ${p => p.$line};
  border-radius: 10px;
  background: ${p => p.$bg};
  color: ${p => p.$color};
  font-size: 11.3px;
  font-weight: ${p => (p.$bold ? 700 : 400)};
`;

const tones = {
  plain: { $line: '#d2d2d2', $bg: '#ebebeb', $color: '#555' },
  blue: { $line: '#a3c4e4', $bg: '#d8e2ed', $color: '#4d8fcb' },
  sky: { $line: '#b5d2ec', $bg: '#d6e2ee', $color: '#4799e0', $bold: true },
  navy: { $line: '#b3bac4', $bg: '#cfd6e0', $color: '#1f5ca5', $bold: true }
};

const columns = ['工牌号', '姓名', '账户', '性别', '类型', '状态', '入职日期', '手机号', '工资卡号', '操作'];

const employees = [
  { id: 'GC0001', name: '管理员', short: '管', bg: '#2f8ae0', account: 'Administrator', sex: '女', sexTone: 'plain', state: '入职', stateTone: 'sky', date: '2023-08-08', phone: '12345678910', card: '12345610' },
  { id: 'GC0040', name: '韩维', short: '韩', bg: '#1257a8', account: '韩维Bvq', sex: '男', sexTone: 'blue', state: '待入职', stateTone: 'navy', date: '2023-08-27', phone: '84356351890', card: '95448276787' }
];

const EmployeePage = () => (
  <Canvas>
    <HeroShadow>
      <Hero>
        <Disc $x={894} $y={20} $d={114} />
        <Disc $x={922} $y={-29} $d={190} />
        <div>
          <HeroTitle>员工信息管理系统</HeroTitle>
          <HeroSub>全方位管理员工档案 · 实时数据统计 · 高效增删改查</HeroSub>
        </div>
        <HeroTotal>员工总数<b>7</b></HeroTotal>
      </Hero>
    </HeroShadow>
    <Row $n={4}>
      {stats.map(([label, value, bg, color, icon]) => (
        <Stat key={label}>
          <StatIcon $bg={bg}>{icon}</StatIcon>
          <StatText $color={color}>{label}<b>{value}</b></StatText>
        </Stat>
      ))}
    </Row>
    <Row $n={3} $mt={18.5}>
      {charts.map(([label, chart, icon]) => (
        <ChartCard key={label}>
          <ChartHead>{icon}{label}</ChartHead>
          {chart}
        </ChartCard>
      ))}
    </Row>
    <TableCard>
      <TableTools>
        <Field $w={265} $pr={0.1} $hint>
          <span>搜索姓名 / 账户 / 工牌号 / 手机...</span>
          <SearchButton><Search size={13} color="#777" /></SearchButton>
        </Field>
        <Field $w={113.5}><span>全部</span><ChevronDown size={13} color="#b5b5b5" /></Field>
        <Field $w={113.5}><span>全部</span><ChevronDown size={13} color="#b5b5b5" /></Field>
        <Refresh>
          <Svg w={14}><rect x="0.5" y="0.5" width="15" height="15" rx="2.5" fill="#3d8fca" stroke="none" /><path d="M5 10V5.5h5.5M8.500 3.500l2 2-2 2M11 6.500V11H5.500M7.500 9l-2 2 2 2" stroke="#dfeaf3" strokeWidth="1.2" /></Svg>
        </Refresh>
        <AddButton>+ 添加员工</AddButton>
      </TableTools>
      <TableRow $h={44.5} $head>
        {columns.map((c, i) => <Cell key={c} $bold $color="#333" $rule={i < 8 && i !== 3} $fixed={i === 9}>{c}</Cell>)}
      </TableRow>
      {employees.map(e => (
        <TableRow key={e.id} $h={47}>
          <Cell><Mono $bold>{e.id}</Mono></Cell>
          <Cell $bold $color="#333"><Avatar $bg={e.bg}>{e.short}</Avatar>{e.name}</Cell>
          <Cell $color="#999" $track={-0.3}>{e.account}</Cell>
          <Cell><Tag {...tones[e.sexTone]}>{e.sex}</Tag></Cell>
          <Cell><Tag {...tones.blue}>正式</Tag></Cell>
          <Cell><Tag {...tones[e.stateTone]}>{e.state}</Tag></Cell>
          <Cell>{e.date}</Cell>
          <Cell>{e.phone}</Cell>
          <Cell><Mono>{e.card}</Mono></Cell>
          <Cell $fixed $gap={10}>
            <span style={{ color: '#3b7cb0' }}>详情</span>
            <span style={{ color: '#6aa6dc' }}>编辑</span>
            <span style={{ color: '#cba36a' }}>删除</span>
          </Cell>
        </TableRow>
      ))}
    </TableCard>
  </Canvas>
);

/* ---------- spreadsheet ---------- */

const FormulaBar = styled.div`
  height: 47px;
  padding-top: 11px;
  display: flex;
`;

const Box = styled.div`
  width: ${p => p.$w}px;
  height: 26px;
  display: flex;
  align-items: center;
  justify-content: ${p => p.$justify || 'center'};
  border: 1px solid #d0d0d0;
  border-radius: 4px;
  background: #e9e9e9;
  padding: 0 ${p => p.$pad || 0}px;
`;

const Dots = styled.div`
  width: 26px;
  line-height: 24px;
  text-align: center;
  color: #777;
`;

const Sheet = styled.div`
  height: 834px;
  display: flex;
  flex-direction: column;
  border: 1px solid ${LINE};
  background: #e9e9e9;
  position: relative;
`;

const Grid = styled.div`
  height: 786px;
  display: grid;
  grid-template-columns: 36px 1125px 1fr;
  grid-template-rows: 17px 1fr;
`;

const Corner = styled.div`
  display: flex;
  justify-content: flex-end;
  align-items: flex-end;
  padding: 0 3px 1px 0;
`;

const ColHeads = styled.div`
  display: flex;
  padding-left: 1.5px;
  background: #c1c1c1;
`;

const ColHead = styled.div`
  width: 30.35px;
  display: flex;
  justify-content: center;
  font-family: 'Liberation Serif', serif;
  font-size: 13.5px;
  line-height: 17px;
  color: ${p => (p.$dim ? '#888' : '#444')};

  span { transform: scaleX(0.75); }
`;

const RowHeads = styled.div`
  background: #bfbfbf;
  overflow: hidden;
`;

const RowHead = styled.div`
  height: 30.43px;
  line-height: 33px;
  text-align: center;
  font-family: 'Liberation Serif', serif;
  font-size: 14px;
  color: #555;
`;

const SheetScroll = styled.div`
  grid-row: 1 / 3;
  grid-column: 3;
  display: flex;
  flex-direction: column;
  align-items: flex-end;
  padding: 3px 2px 0;
`;

const Splitter = styled.div`
  width: ${p => p.$w}px;
  height: ${p => p.$h}px;
  border: 1px solid #a8a8a8;
`;

const HScroll = styled.div`
  height: 18px;
  display: flex;
  align-items: center;
  padding: 0 19px 0 3px;
  gap: 3px;
`;

const HThumb = styled.div`
  width: 588px;
  height: 5px;
  border-radius: 3px;
  background: #bdbdbd;
`;

/* page guides laid over the sheet */
const GuideV = styled.div`
  position: absolute;
  left: 1031px;
  top: 0;
  height: 804px;
  width: 1px;
  background: repeating-linear-gradient(#999 0 7px, transparent 7px 10px);
`;

const GuideH = styled.div`
  position: absolute;
  left: 0;
  top: 605px;
  width: 1206px;
  height: 1px;
  background: repeating-linear-gradient(90deg, #9a9a9a 0 5px, transparent 5px 9px);
`;

const Tabs = styled.div`
  height: 29px;
  display: flex;
  background: #e3e2e1;
`;

const TabNav = styled.div`
  width: 85px;
  display: flex;
  align-items: center;
  padding-left: 25px;
  gap: 18px;
  border-top: 1px solid #b5b5b5;
`;

const Tab = styled.div`
  width: ${p => p.$w}px;
  display: flex;
  align-items: center;
  justify-content: center;
  gap: 2px;
  border-top: 1px solid ${p => (p.$active ? '#e9e9e9' : '#b5b5b5')};
  border-bottom: ${p => (p.$active ? '2px solid #2f8fd0' : '0')};
  border-left: ${p => (p.$active ? '1px solid #b5b5b5' : '0')};
  border-right: ${p => (p.$active ? '1px solid #b5b5b5' : '0')};
  margin-bottom: ${p => (p.$active ? 3 : 0)}px;
  padding-top: ${p => (p.$active ? 4 : 0)}px;
  background: ${p => (p.$active ? '#e9e9e9' : 'linear-gradient(#b0b0b0, #b0b0b0) 0 50% / 1px 23px no-repeat')};
  color: ${p => (p.$active ? '#3a94d2' : '#444')};
  font-weight: ${p => (p.$active ? 700 : 400)};
`;

const TabMore = styled.div`
  flex: 1;
  border-top: 1px solid #b5b5b5;
  color: #3a94d2;
  text-align: center;
  font-weight: 700;
  letter-spacing: 2.5px;
  line-height: 20px;
`;

const colNames = [...Array(37)].map((_, i) => (i < 26 ? '' : 'A') + String.fromCharCode(65 + i % 26));

const tabs = [
  ['侧边菜单栏', 111], ['基于spec_设计skill生成', 182], ['官网类页面1', 119.5], ['使用UI设计skill生成的页面', 200],
  ['官网类页面2', 119], ['一级菜单_列表页面', 155], ['页面1', 81.5], ['增删改查权限', 125]
];

const Workbook = () => (
  <Column $w={1215} $ml={8}>
    <FormulaBar>
      <Box $w={169}>A1</Box>
      <Dots>⋮</Dots>
      <Box $w={127} $justify="space-between" $pad={13}>
        <X size={16} color="#8a8a8a" strokeWidth={2.2} />
        <Check size={16} color="#8a8a8a" strokeWidth={2.6} />
        <Letter $serif $italic $weight={400} $size={17}>fx</Letter>
      </Box>
      <Box $w={887} $justify="flex-end" $pad={3} style={{ marginLeft: 'auto' }}>
        <ChevronsDown size={12} color="#666" />
      </Box>
    </FormulaBar>
    <Sheet>
      <Grid>
        <Corner><Svg w={11} box="0 0 11 11"><path d="M11 0v11H0z" fill="#a5a5a5" stroke="none" /></Svg></Corner>
        <ColHeads>{colNames.map(c => <ColHead key={c} $dim={c === 'S'}><span>{c}</span></ColHead>)}</ColHeads>
        <RowHeads>{[...Array(25)].map((_, i) => <RowHead key={i}>{i + 1}</RowHead>)}</RowHeads>
        <EmployeePage />
        <SheetScroll>
          <Splitter $w={18} $h={5} />
          <VScroll $pad="6px 0 2px" style={{ flex: 1 }}>
            <Tri d="M0 7 4 2l4 5z" /><Thumb $h={360} /><Tri d="M0 2l4 5 4-5z" />
          </VScroll>
        </SheetScroll>
      </Grid>
      <HScroll>
        <Tri d="M7 0 2 4l5 4z" />
        <HThumb />
        <Spacer />
        <Tri d="M1 0l5 4-5 4z" />
        <Splitter $w={6} $h={18} />
      </HScroll>
      <Tabs>
        <TabNav><Tri w={9} d="M7 0 2 4l5 4z" /><Tri w={10} d="M1 0l6 4-6 4z" color="#2f8fd0" /></TabNav>
        {tabs.map(([label, w], i) => <Tab key={label} $w={w} $active={i === 7}><Globe w={12} /><span>{label}</span></Tab>)}
        <TabMore>...</TabMore>
      </Tabs>
      <GuideV />
      <GuideH />
    </Sheet>
  </Column>
);

/* ---------- cell settings ---------- */

const SettingsPanel = styled(Panel)`
  border-radius: 9px 0 0 9px;
  border-right: 0;
  font-size: 14.3px;
  line-height: 20px;
  position: relative;
`;

const SettingsBody = styled.div`
  flex: 1;
  padding: 18px 7px 0 10px;
`;

const ReactTitle = styled.div`
  height: 34px;
  display: flex;
  align-items: flex-start;
  gap: 5px;
  border-bottom: 1px solid #d3d3d3;
`;

const Label = styled.div`
  display: flex;
  align-items: center;
  gap: 7px;
  height: 20px;
  margin: ${p => p.$mt}px 0 0 4px;
`;

const Input = styled.div`
  height: ${p => p.$h || 25}px;
  margin: ${p => p.$mt || 4}px 0 0 14px;
  display: flex;
  justify-content: flex-end;
  border: 1px solid #c4c4c4;
  border-radius: 4px;
`;

const PickButton = styled.div`
  width: 22px;
  margin: -1px;
  display: flex;
  align-items: center;
  justify-content: center;
  border: 1px solid #888;
  border-radius: 0 4px 4px 0;
`;

const LinkRow = styled.div`
  height: 36.13px;
  padding-left: 5px;
  display: flex;
  align-items: center;
  gap: ${p => p.$gap || 0.5}px;

  a {
    font-size: 15px;
    letter-spacing: 0.1px;
    color: ${p => (p.$hover ? '#c0803c' : '#2480c4')};
    text-decoration: underline;
    text-underline-offset: 2px;
    font-weight: ${p => (p.$bold ? 700 : 400)};
  }
`;

const CheckRow = styled.div`
  height: 22px;
  padding-left: 15px;
  display: flex;
  align-items: center;
  gap: 5px;
  font-size: 12.5px;
`;

const CheckMark = styled.div`
  width: 14px;
  height: 14px;
  border: 1px solid #555;
`;

const Action = styled.div`
  height: 25px;
  margin: 0 0 4px 14px;
  padding-left: 6px;
  line-height: 23px;
  border: 1px solid #c4c4c4;
  border-radius: 3px;
  font-size: 12.6px;
`;

const Pointer = styled.div`
  position: absolute;
  left: 19px;
  top: 286px;
`;

const links = [
  ['React 代码...', 1, 5], ['属性...', 0], ['数据源...', 1], ['静态图片资源...', 0], ['权限...', 1], ['事件处理...', 0],
  ['可用服务端命令...', 1], ['上传限制...', 1, 5]
];

const CellSettings = () => (
  <Column $w={308}>
    <PanelHead>
      <span style={{ marginLeft: 11 }}>单元格设置</span>
      <Spacer />
      <Pin />
      <Spacer style={{ flex: '0 0 5px' }} />
    </PanelHead>
    <SettingsPanel>
      <SettingsBody>
        <ReactTitle>
          <Svg w={15} h={19}>
            <ellipse cx="8" cy="8" rx="7.3" ry="2.9" strokeWidth="1.3" />
            <ellipse cx="8" cy="8" rx="7.3" ry="2.9" strokeWidth="1.3" transform="rotate(60 8 8)" />
            <ellipse cx="8" cy="8" rx="7.3" ry="2.9" strokeWidth="1.3" transform="rotate(120 8 8)" />
            <circle cx="8" cy="8" r="1.8" fill="#3f86c6" />
          </Svg>
          <span>React单元格</span>
        </ReactTitle>
        <Label $mt={13}>CSS类名 <Help /></Label>
        <Input>
          <PickButton>
            <Svg w={17} h={14} box="0 0 17 14"><path d="M1 1h15v12H1zM1 5h15M1 9h15M6 1v12M11 1v12" stroke="#aaa" /><path d="M1 2h6" strokeWidth="2.5" /><path d="m6 4 7 5-2 2-5-4z" fill="#b97f48" stroke="none" /></Svg>
          </PickButton>
        </Input>
        <div style={{ marginTop: 8 }}>
          {links.map(([label, bold, gap], i) => (
            <LinkRow key={label} $bold={bold} $gap={gap} $hover={i === 4}><a>{label}</a><Help /></LinkRow>
          ))}
        </div>
        <Label $mt={12}>预置类库 <Help w={17} /></Label>
        <div style={{ marginTop: 4 }}>
          {['Ant Design', 'ECharts'].map(c => (
            <CheckRow key={c}><CheckMark><Check size={12} color="#333" strokeWidth={2.8} /></CheckMark>{c}</CheckRow>
          ))}
        </div>
        <div style={{ marginTop: 8 }}><LinkRow $gap={5}><a>AI 生成规则...</a><Help /></LinkRow></div>
        <Label $mt={13}>注释</Label>
        <Input $h={43} />
        <Label $mt={20}>可用操作 <Help w={17} /></Label>
        <div style={{ marginTop: 6 }}>
          <Action>设置属性值</Action>
          <Action>执行方法</Action>
        </div>
      </SettingsBody>
      <PanelTabs $left={56} $gap={17} style={{ fontSize: 12.6 }}>
        <PanelTab>数据绑定</PanelTab>
        <PanelTab $active>单元格设置</PanelTab>
        <PanelTab>页面设置</PanelTab>
      </PanelTabs>
      <Pointer>
        <Svg w={20} h={25} box="0 0 20 25">
          <path d="M6.5 14V3q0-1.8 1.7-1.8T10 3v7q2-1 3 .5 2-.7 2.7.8 2.3-.2 2.3 2V17q0 3-2 7H8Q6 19 3 16q-2-2-.5-3 1.5-.8 4 2z" fill="#f1f1f1" stroke="#222" strokeWidth="1.3" />
          <path d="M10 10v4M13 10.5V14M15.7 11.5V14.5" stroke="#222" />
        </Svg>
      </Pointer>
    </SettingsPanel>
  </Column>
);

/* ---------- status bar ---------- */

const Status = styled.div`
  height: 25px;
  padding: 0 0 1px 6px;
  display: flex;
  align-items: center;
  background: #e5e7e6;
  position: relative;
`;

const ModeIcon = styled.div`
  width: 22px;
  height: 22px;
  margin-right: 13.5px;
  display: flex;
  align-items: center;
  justify-content: center;
  border-radius: 4px;
  border: ${p => (p.$on ? '1px solid #b0b0b0' : '0')};
  background: ${p => (p.$on ? '#cdcdcd' : 'none')};
`;

const Timer = styled.div`
  position: absolute;
  left: 1808px;
  bottom: -12px;
  width: 47px;
  height: 47px;
  line-height: 46px;
  text-align: center;
  border-radius: 50%;
  border: 1px solid #8fbde6;
  background: #3f8dd0;
  color: #dbe8f4;
  font-size: 14.5px;
`;

const Zoom = styled.div`
  width: 141px;
  margin-left: 65px;
  display: flex;
  align-items: center;
`;

const modes = [
  <><rect x="0.5" y="1" width="15" height="14" fill="#666" stroke="none" /><path d="m3 4 3.5 3L3 10" stroke="#8fc0ea" strokeWidth="1.3" /><path d="M8 12h5" stroke="#ddd" /></>,
  <><circle cx="8" cy="5.5" r="5" fill="#d8b478" stroke="none" /><path d="M5 8h6v4H5z" fill="#d8b478" stroke="none" /><path d="M2 14.5h12" stroke="#999" /><path d="M8 10v3" stroke="#b97f48" strokeWidth="2" /></>,
  <text x="2" y="12.5" fontSize="14" fontStyle="italic" fontFamily="Liberation Serif" fill="#4a90cb" stroke="none">fx</text>,
  elementIcons.single,
  <><path d="M1 5h10v10H1z" fill="#dce8f2" stroke="#666" /><path d="M1 7h10" strokeWidth="3" stroke="#4a90cb" /><path d="M5 2h8l2-1v4l-4 2-6-2z" fill="#c09a68" stroke="#666" /></>,
  <><path d="M1 1h12v12H1z" stroke="#9aa" fill="#dde" /><path d="M4 4h5v5H4zM8 8h7v7H8z" fill="#3f86c6" stroke="none" /><path d="M10 10h3M10 13h3" stroke="#cde" /></>,
  <><path d="M1 2h14v12H1z" fill="#4a90cb" stroke="#3a78aa" /><path d="M3 5.500h10M3 10.500h10" stroke="#e3edf5" strokeWidth="2.2" /></>,
  <><rect x="1" y="1" width="14" height="14" stroke="#888" fill="#e3e3e3" /><rect x="3.5" y="5.5" width="6" height="4" fill="#4a90cb" stroke="none" /><path d="M3 3.5h10M11.5 6v7M3 12.5h7" stroke="#888" /></>
];

const StatusBar = () => (
  <Status>
    <span style={{ width: 57 }}>显示模式</span>
    {modes.map((m, i) => <ModeIcon key={i} $on={i === 7}><Svg w={16}>{m}</Svg></ModeIcon>)}
    <Spacer />
    <Svg w={18} box="0 0 18 18"><circle cx="9" cy="9" r="8.5" fill="#d3b788" stroke="none" /><path d="M9 4v6M9 12v2" stroke="#f0eadf" strokeWidth="1.6" /></Svg>
    <span style={{ marginLeft: 15, width: 95 }}>1184 x 896 像素</span>
    <Zoom>
      <Svg w={65} h={14} box="0 0 65 14"><path d="M0 7h65" stroke="#999" /><path d="M12 1v12" stroke="#666" strokeWidth="3" /></Svg>
      <Svg w={26} h={14} box="0 0 26 14"><path d="M14 3v8M10 7h8" stroke="#555" /></Svg>
      <Spacer style={{ flex: '0 0 10px' }} />
      <span>90%</span>
    </Zoom>
    <Timer>00:00</Timer>
  </Status>
);

const App = () => (
  <Page>
    <GlobalStyle />
    <Header />
    <Ribbon />
    <Main>
      <ObjectManager />
      <Elements />
      <Workbook />
      <CellSettings />
    </Main>
    <StatusBar />
  </Page>
);

export default App;
